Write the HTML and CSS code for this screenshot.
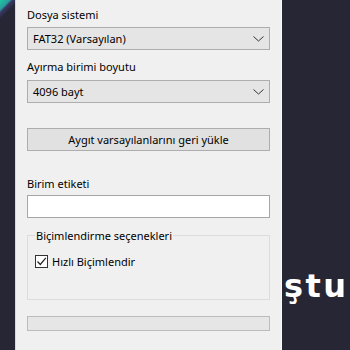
FILE: index.html
```html
<!DOCTYPE html>
<html lang="tr">
<head>
<meta charset="UTF-8">
<title>Biçimlendir</title>
<link rel="stylesheet" href="styles.css">
</head>
<body>

<div class="screen">
  <div class="side-strip"></div>

  <div class="dialog">
    <div class="label first">Dosya sistemi</div>
    <div class="select">
      <span>FAT32 (Varsayılan)</span>
      <svg class="chevron" width="11" height="6" viewBox="0 0 11 6"><path d="M0.5 0.5 L5.5 5 L10.5 0.5" fill="none" stroke="#333" stroke-width="1"/></svg>
    </div>

    <div class="label">Ayırma birimi boyutu</div>
    <div class="select second">
      <span>4096 bayt</span>
      <svg class="chevron" width="11" height="6" viewBox="0 0 11 6"><path d="M0.5 0.5 L5.5 5 L10.5 0.5" fill="none" stroke="#333" stroke-width="1"/></svg>
    </div>

    <button class="restore">Aygıt varsayılanlarını geri yükle</button>

    <div class="label volume">Birim etiketi</div>
    <input class="text-input" type="text" value="">

    <fieldset class="group">
      <legend>Biçimlendirme seçenekleri</legend>
      <label class="check-row">
        <span class="checkbox">
          <svg width="11" height="11" viewBox="0 0 11 11"><path d="M1.5 5.5 L4.3 8.5 L9.8 1.8" fill="none" stroke="#222" stroke-width="1.2"/></svg>
        </span>
        Hızlı Biçimlendir
      </label>
    </fieldset>

    <div class="progress"></div>
  </div>

  <div class="backdrop">
    <span class="big-text">ştu</span>
  </div>
</div>

</body>
</html>
```

FILE: styles.css
```css
body {
  margin: 0;
  font-family: "Noto Sans", Arial, sans-serif;
  font-size: 11px;
  color: #000;
}

.screen {
  display: flex;
  width: 350px;
  height: 350px;
  overflow: hidden;
  background: #262634;
}

.side-strip {
  width: 15px;
  flex: none;
  background: linear-gradient(135deg, #1fc8a4 0, #2a9d9a 7px, #3a3a6a 9px, #262634 14px);
}

.dialog {
  width: 267px;
  flex: none;
  box-sizing: border-box;
  padding: 7px 11px 0 11px;
  background: #f0f0f0;
  border-left: 1px solid #d8d8d8;
  border-right: 1px solid #fafafa;
}

.label {
  height: 15px;
  line-height: 15px;
  margin-top: 9px;
}

.label.first {
  margin-top: 0;
}

.label.volume {
  margin-top: 25px;
}

.select {
  display: flex;
  align-items: center;
  justify-content: space-between;
  height: 23px;
  box-sizing: border-box;
  margin-top: 5px;
  padding: 0 5px 0 5px;
  background: #e5e5e5;
  border: 1px solid #adadad;
}

.select.second {
  margin-top: 6px;
}

.restore {
  display: block;
  width: 100%;
  height: 23px;
  margin-top: 25px;
  padding: 0;
  font: inherit;
  color: #000;
  background: #e1e1e1;
  border: 1px solid #adadad;
}

.text-input {
  display: block;
  width: 100%;
  height: 23px;
  box-sizing: border-box;
  margin: 4px 0 0 0;
  background: #fff;
  border: 1px solid #a6a6a6;
}

.group {
  margin: 10px 0 0 0;
  padding: 11px 7px 0 7px;
  height: 72px;
  box-sizing: border-box;
  border: 1px solid #dcdcdc;
}

.group legend {
  padding: 0 1px;
  line-height: 15px;
}

.check-row {
  display: flex;
  align-items: center;
  gap: 4px;
}

.checkbox {
  display: flex;
  align-items: center;
  justify-content: center;
  width: 13px;
  height: 13px;
  box-sizing: border-box;
  background: #fff;
  border: 1px solid #333;
}

.progress {
  height: 15px;
  margin-top: 16px;
  box-sizing: border-box;
  background: #e6e6e6;
  border: 1px solid #bcbcbc;
}

.backdrop {
  flex: 1;
  padding: 266px 0 0 2px;
  overflow: hidden;
  white-space: nowrap;
}

.big-text {
  font-family: "DejaVu Sans", sans-serif;
  font-weight: 700;
  font-size: 32px;
  letter-spacing: 2.5px;
  color: #fff;
  line-height: 40px;
}
```
